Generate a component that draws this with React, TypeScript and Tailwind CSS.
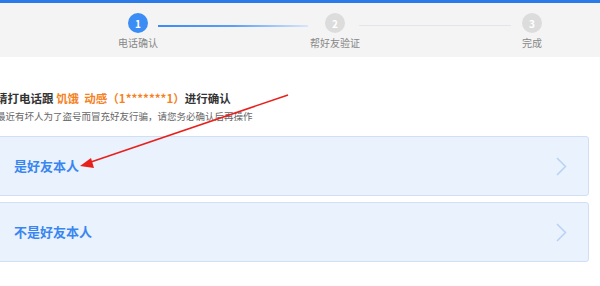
const steps = [
  { n: 1, label: '电话确认', active: true },
  { n: 2, label: '帮好友验证', active: false },
  { n: 3, label: '完成', active: false },
];

function Steps() {
  return (
    <div className="relative h-[54px] bg-[#f4f4f4]">
      <div className="absolute left-[158px] top-[22px] h-[1.5px] w-[150px] bg-gradient-to-r from-[#3b8cf5] via-[#5b9ef5] to-[#d8e6f8]" />
      <div className="absolute left-[359px] top-[22px] h-px w-[152px] bg-[#e2e6ea]" />
      <div className="flex pl-[88px]">
        {steps.map((s) => (
          <div key={s.n} className="mr-[97px] flex w-[100px] shrink-0 flex-col items-center pt-[10px]">
            <div
              className={`flex h-[20px] w-[20px] items-center justify-center rounded-full text-[10px] font-bold text-white ${
                s.active ? 'bg-[#3b8cf5]' : 'bg-[#dcdcdc]'
              }`}
            >
              {s.n}
            </div>
            <div className="mt-[3px] text-[10px] leading-[14px] text-[#888]">{s.label}</div>
          </div>
        ))}
      </div>
    </div>
  );
}

function Choice({ text }: { text: string }) {
  return (
    <button className="flex h-[60px] w-full items-center justify-between rounded-[3px] border border-[#cfe0f6] bg-[#eaf2fd] pl-[19px] pr-[21px] text-left">
      <span className="text-[13px] font-bold text-[#3a86f0]">{text}</span>
      <svg width="11" height="19" viewBox="0 0 11 19" fill="none">
        <polyline points="1,1 9.5,9.5 1,18" stroke="#b8d2f4" strokeWidth="1.5" />
      </svg>
    </button>
  );
}

export default function App() {
  return (
    <div
      className="relative h-[286px] w-[600px] overflow-hidden bg-white"
      style={{ fontFamily: '"Noto Sans CJK SC", "Noto Sans", sans-serif' }}
    >
      <div className="h-[3px] bg-[#2a7be8]" />
      <Steps />
      <div className="ml-[-6px] w-[595px] pt-[33px]">
        <div className="pl-[2px] text-[11.5px] font-bold leading-[16px] text-[#333]">
          请打电话跟 <span className="text-[#f5821f]">饥饿&nbsp;&nbsp;动感（1*******1）</span>进行确认
        </div>
        <div className="mt-[3px] pl-[2px] text-[9.5px] leading-[14px] text-[#666]">
          最近有坏人为了盗号而冒充好友行骗，请您务必确认后再操作
        </div>
        <div className="mt-[13px] flex flex-col gap-[6px]">
          <Choice text="是好友本人" />
          <Choice text="不是好友本人" />
        </div>
      </div>
      <svg className="pointer-events-none absolute left-0 top-0" width="600" height="286">
        <line x1="288" y1="95" x2="88" y2="163" stroke="#e8201c" strokeWidth="1.5" />
        <polygon points="80,166 91,158 94,168" fill="#e8201c" />
      </svg>
    </div>
  );
}
